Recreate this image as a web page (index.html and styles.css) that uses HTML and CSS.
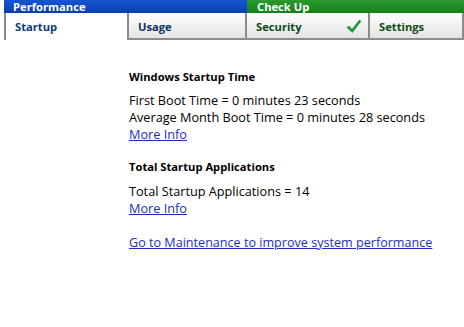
FILE: index.html
```html
<!DOCTYPE html>
<html lang="en">
<head>
  <meta charset="UTF-8">
  <title>Performance</title>
  <link rel="stylesheet" href="styles.css">
</head>
<body>

  <div class="top">
    <div class="group perf">
      <div class="group-title">Performance</div>
      <div class="tabs">
        <div class="tab active">Startup</div>
        <div class="tab">Usage</div>
      </div>
    </div>
    <div class="group check">
      <div class="group-title">Check Up</div>
      <div class="tabs">
        <div class="tab sec">Security
          <svg class="tick" width="16" height="15" viewBox="0 0 16 15">
            <path d="M0.5 8.5 L3.2 6.8 L6 10 L13.2 0.8 L15.5 2 L6.4 14 Z" fill="#1f9a3a"/>
          </svg>
        </div>
        <div class="tab">Settings</div>
      </div>
    </div>
  </div>

  <main>
    <h3>Windows Startup Time</h3>
    <p>
      First Boot Time = 0 minutes 23 seconds<br>
      Average Month Boot Time = 0 minutes 28 seconds<br>
      <a href="#">More Info</a>
    </p>

    <h3 class="second">Total Startup Applications</h3>
    <p>
      Total Startup Applications = 14<br>
      <a href="#">More Info</a>
    </p>

    <p class="go"><a href="#">Go to Maintenance to improve system performance</a></p>
  </main>

</body>
</html>
```

FILE: styles.css
```css
body {
  margin: 0;
  font-family: "Open Sans", "DejaVu Sans", sans-serif;
  font-size: 12.7px;
  color: #000;
  background: #fff;
}

.top {
  display: flex;
  padding-left: 4px;
}

.group-title {
  height: 13px;
  line-height: 13px;
  color: #fff;
  font-weight: bold;
  font-size: 11.2px;
  padding-left: 9px;
}

.perf {
  width: 243px;
}

.perf .group-title {
  background: linear-gradient(#1556d2, #0a3fae);
}

.check {
  flex: 1;
}

.check .group-title {
  background: linear-gradient(#2a9a2e, #17801c);
  padding-left: 10px;
}

.tabs {
  display: flex;
  height: 27px;
}

.tab {
  box-sizing: border-box;
  height: 27px;
  line-height: 27px;
  font-weight: bold;
  font-size: 11.2px;
  padding-left: 9px;
  background: linear-gradient(#ffffff, #e4e4e4);
  border: 2px solid #8c8c8c;
  border-left-width: 0;
  border-top: 0;
  color: #0d2f63;
}

.perf .tab {
  width: 123px;
}

.perf .tab + .tab {
  width: 120px;
  border-left-width: 2px;
}

.tab.active {
  background: #fff;
  border-left-width: 2px;
  border-right: 0;
  border-bottom: 0;
  color: #0d3b7a;
}

.check .tab {
  color: #0e4a17;
}

.check .sec {
  width: 123px;
  position: relative;
}

.check .tab + .tab {
  flex: 1;
}

.tick {
  position: absolute;
  right: 6px;
  top: 6px;
}

main {
  padding: 28px 0 0 129px;
}

h3 {
  font-size: 11.2px;
  margin: 0 0 7px;
  line-height: 17px;
}

h3.second {
  margin-bottom: 8px;
}

p {
  margin: 0 0 15px;
  line-height: 17px;
}

a {
  color: #1a2ec4;
}

.go {
  margin-top: 17px;
  font-size: 12.6px;
}
```
